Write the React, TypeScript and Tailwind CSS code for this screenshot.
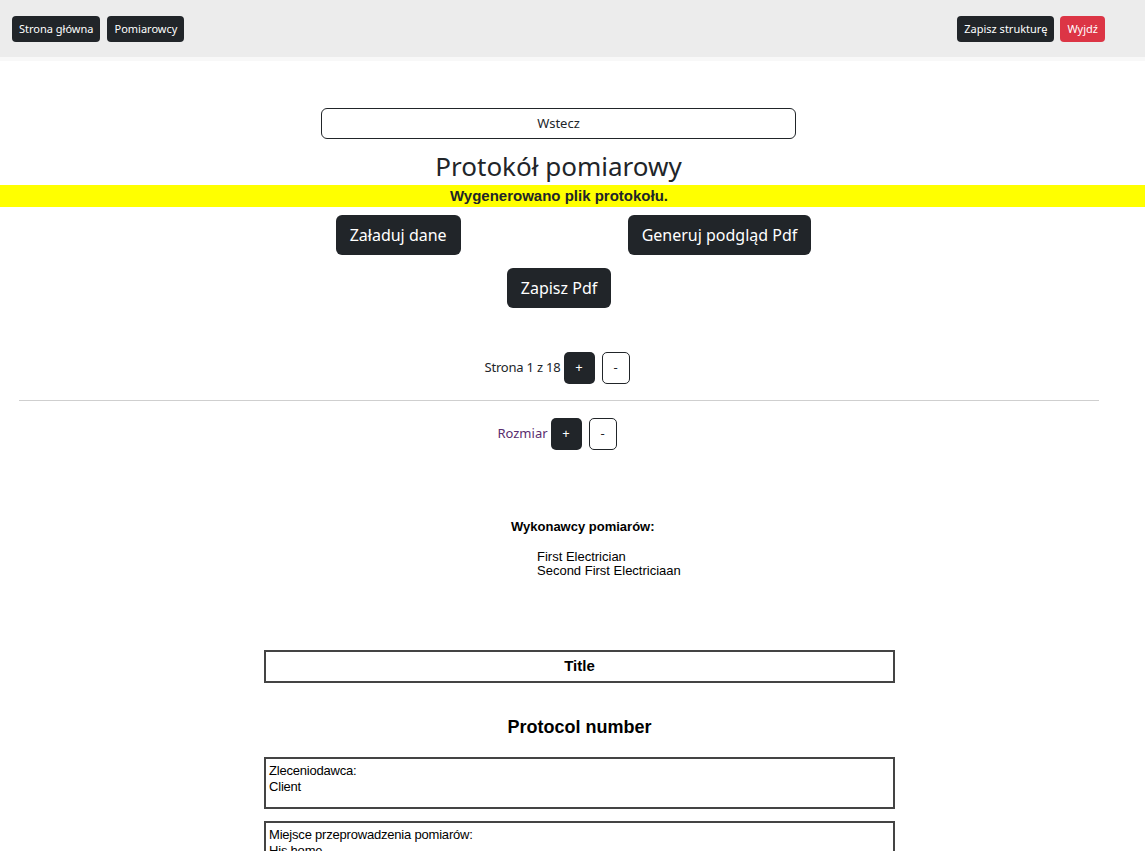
import React from "react";

const ui = { fontFamily: '"Segoe UI", "Noto Sans", "Open Sans", sans-serif' };
const pdf = { fontFamily: '"Liberation Sans", Arial, sans-serif' };

function NavButton({ label, red }: { label: string; red?: boolean }) {
  return (
    <button
      className={`h-[26px] rounded-[4px] px-[7px] text-[11px] leading-none text-white ${
        red ? "bg-[#dc3545]" : "bg-[#212529]"
      }`}
    >
      {label}
    </button>
  );
}

function BigButton({ label }: { label: string }) {
  return (
    <button className="h-10 rounded-[6px] bg-[#212529] px-[14px] text-[16px] leading-none text-white">
      {label}
    </button>
  );
}

function StepButtons() {
  return (
    <>
      <button className="ml-[3px] h-[32px] w-[31px] rounded-[5px] bg-[#212529] text-[13px] text-white">+</button>
      <button className="ml-[7px] h-[32px] w-[28px] rounded-[5px] border border-[#212529] bg-white text-[13px] text-[#212529]">
        -
      </button>
    </>
  );
}

function InfoBox({ label, value }: { label: string; value: string }) {
  return (
    <div className="h-[52px] border-2 border-[#444] px-[3px] pt-[4px] text-[13px] leading-[16px] tracking-[-0.2px] text-black">
      <div>{label}</div>
      <div>{value}</div>
    </div>
  );
}

export default function App() {
  return (
    <div className="min-h-[851px] bg-white text-[#212529]" style={ui}>
      <header className="flex h-[57px] items-center justify-between bg-[#ececec] pl-3 pr-10">
        <div className="flex gap-[7px]">
          <NavButton label="Strona główna" />
          <NavButton label="Pomiarowcy" />
        </div>
        <div className="flex gap-[6px]">
          <NavButton label="Zapisz strukturę" />
          <NavButton label="Wyjdź" red />
        </div>
      </header>
      <div className="h-1 bg-[#f8f8f8]" />

      <main className="pb-10">
        <div className="w-[1117px]">
          <div className="flex justify-center pt-[47px]">
            <button className="h-[31px] w-[475px] rounded-[6px] border border-[#212529] text-[13px]">Wstecz</button>
          </div>
          <h1 className="mt-[9px] text-center text-[26px] leading-[37px]">Protokół pomiarowy</h1>
        </div>

        <div className="bg-[#ffff00] pr-[27px] text-center text-[15px] font-bold leading-[22px] text-[#212529]" style={pdf}>
          Wygenerowano plik protokołu.
        </div>

        <div className="mt-2 flex justify-center gap-[167px] pl-[2px]">
          <BigButton label="Załaduj dane" />
          <BigButton label="Generuj podgląd Pdf" />
        </div>

        <div className="w-[1118px]">
          <div className="mt-[13px] flex justify-center">
            <BigButton label="Zapisz Pdf" />
          </div>

          <div className="mt-11 flex items-center justify-center pr-[4px] text-[13px]">
            <span className="tracking-[-0.2px]">Strona 1 z 18</span>
            <StepButtons />
          </div>
          <hr className="mx-[19px] mt-4 border-[#cfcfcf]" />
          <div className="mt-[17px] flex items-center justify-center pr-[4px] text-[13px]">
            <span className="text-[#5a2d6e]">Rozmiar</span>
            <StepButtons />
          </div>
        </div>

        <div className="ml-[264px] w-[631px] text-black" style={pdf}>
          <div className="mt-[69px] pl-[247px] text-[13px]">
            <div className="font-bold leading-[16px]">Wykonawcy pomiarów:</div>
            <ul className="mt-[15px] pl-[26px] leading-[14px]">
              <li>First Electrician</li>
              <li>Second First Electriciaan</li>
            </ul>
          </div>

          <div className="mt-[72px] flex h-[33px] items-center justify-center border-2 border-[#444] text-[15px] font-bold">
            Title
          </div>
          <div className="mt-[33px] text-center text-[18px] font-bold leading-[22px]">Protocol number</div>
          <div className="mt-[19px] flex flex-col gap-[12px]">
            <InfoBox label="Zleceniodawca:" value="Client" />
            <InfoBox label="Miejsce przeprowadzenia pomiarów:" value="His home" />
          </div>
        </div>
      </main>
    </div>
  );
}
